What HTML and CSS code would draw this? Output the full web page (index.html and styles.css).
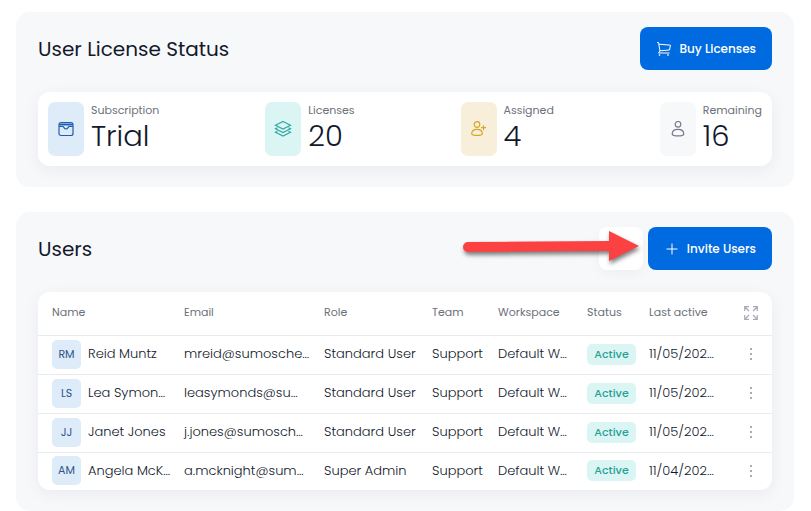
FILE: index.html
```html
<!DOCTYPE html>
<html lang="en">
<head>
    <meta charset="UTF-8">
    <meta name="viewport" content="width=device-width, initial-scale=1.0">
    <title>Users</title>
    <link rel="stylesheet" href="styles.css">
</head>
<body>
    <section class="panel">
        <div class="panel-header">
            <h2>User License Status</h2>
            <button class="btn" type="button">
                <svg width="16" height="16" viewBox="0 0 16 16">
                    <path d="M1 1.500h1.500l1.500 8.500M3 3.200l11.500 1-1 4.800-9.500.8M4 10l-1.500 2h11"/>
                    <circle cx="3.500" cy="14" r=".5"/>
                    <circle cx="12" cy="14" r=".5"/>
                </svg>
                Buy Licenses
            </button>
        </div>
        <div class="card stats">
            <div class="stat">
                <div class="stat-icon blue">
                    <svg width="16" height="16" viewBox="0 0 16 16">
                        <path class="tint" d="M1.500 2h13v3h-13z"/>
                        <rect x="1" y="1.500" width="14" height="13" rx="2"/>
                        <path d="M1 3.500h14M1 5.500h4c.8 0 1 2.500 3 2.500s2.200-2.500 3-2.500h4"/>
                    </svg>
                </div>
                <div>
                    <div class="stat-label">Subscription</div>
                    <div class="stat-value">Trial</div>
                </div>
            </div>
            <div class="stat">
                <div class="stat-icon teal">
                    <svg width="18" height="18" viewBox="0 0 18 18">
                        <path d="M9 1.500l7.500 3.700L9 9 1.500 5.200zM3.500 7.700l-2 1L9 12.500l7.500-3.800-2-1M3.500 11.200l-2 1L9 16l7.500-3.800-2-1"/>
                    </svg>
                </div>
                <div>
                    <div class="stat-label">Licenses</div>
                    <div class="stat-value">20</div>
                </div>
            </div>
            <div class="stat">
                <div class="stat-icon yellow">
                    <svg width="16" height="16" viewBox="0 0 16 16">
                        <circle cx="6" cy="3.500" r="2.800"/>
                        <path d="M.7 13c0-3 2.300-4.600 5.300-4.600s5.300 1.600 5.300 4.600c-.8 1.900-9.800 1.900-10.600 0zM12.500 4.200v5M10 6.700h5"/>
                    </svg>
                </div>
                <div>
                    <div class="stat-label">Assigned</div>
                    <div class="stat-value">4</div>
                </div>
            </div>
            <div class="stat">
                <div class="stat-icon grey">
                    <svg width="16" height="16" viewBox="0 0 16 16">
                        <circle cx="8" cy="3.300" r="2.800"/>
                        <path d="M2.200 13.200c0-3.200 2.600-4.800 5.800-4.800s5.800 1.600 5.800 4.800c-.8 2.200-10.800 2.200-11.600 0z"/>
                    </svg>
                </div>
                <div>
                    <div class="stat-label">Remaining</div>
                    <div class="stat-value">16</div>
                </div>
            </div>
        </div>
    </section>

    <section class="panel">
        <div class="panel-header">
            <h2>Users</h2>
            <div class="actions">
                <button class="btn-icon" type="button" aria-label="Filter">
                    <svg width="16" height="16" viewBox="0 0 16 16">
                        <path d="M2 3h12M4 7h8M6 11h4"/>
                    </svg>
                </button>
                <button class="btn" type="button">
                    <svg width="16" height="16" viewBox="0 0 16 16">
                        <path d="M8 2.500v11M2.500 8h11"/>
                    </svg>
                    Invite Users
                </button>
                <!-- Arrow pointing at the invite button -->
                <svg class="arrow" width="184" height="43" viewBox="0 0 184 43">
                    <path d="M10 15l141-1V4l30 15-30 15V24l-141 1a5 5 0 0 1 0-10z"/>
                </svg>
            </div>
        </div>
        <div class="card">
            <table>
                <thead>
                    <tr>
                        <th>Name</th>
                        <th class="col-email">Email</th>
                        <th class="col-role">Role</th>
                        <th class="col-team">Team</th>
                        <th class="col-workspace">Workspace</th>
                        <th class="col-status">Status</th>
                        <th class="col-last">Last active</th>
                        <th class="col-menu">
                            <button class="expand" type="button" aria-label="Expand table">
                                <svg width="16" height="16" viewBox="0 0 16 16">
                                    <path d="M6 1.700H1.700V6M2 2l4 4M10 1.700h4.300V6M14 2l-4 4M6 14.300H1.700V10M2 14l4-4M10 14.300h4.300V10M14 14l-4-4"/>
                                </svg>
                            </button>
                        </th>
                    </tr>
                </thead>
                <tbody>
                    <tr>
                        <td><div class="user"><span class="avatar">RM</span>Reid Muntz</div></td>
                        <td>mreid@sumosche…</td>
                        <td>Standard User</td>
                        <td>Support</td>
                        <td>Default W…</td>
                        <td><span class="badge">Active</span></td>
                        <td>11/05/202…</td>
                        <td><button class="dots" type="button" aria-label="More"><i></i><i></i><i></i></button></td>
                    </tr>
                    <tr>
                        <td><div class="user"><span class="avatar">LS</span>Lea Symon…</div></td>
                        <td>leasymonds@su…</td>
                        <td>Standard User</td>
                        <td>Support</td>
                        <td>Default W…</td>
                        <td><span class="badge">Active</span></td>
                        <td>11/05/202…</td>
                        <td><button class="dots" type="button" aria-label="More"><i></i><i></i><i></i></button></td>
                    </tr>
                    <tr>
                        <td><div class="user"><span class="avatar">JJ</span>Janet Jones</div></td>
                        <td>j.jones@sumosch…</td>
                        <td>Standard User</td>
                        <td>Support</td>
                        <td>Default W…</td>
                        <td><span class="badge">Active</span></td>
                        <td>11/05/202…</td>
                        <td><button class="dots" type="button" aria-label="More"><i></i><i></i><i></i></button></td>
                    </tr>
                    <tr>
                        <td><div class="user"><span class="avatar">AM</span>Angela McK…</div></td>
                        <td>a.mcknight@sum…</td>
                        <td>Super Admin</td>
                        <td>Support</td>
                        <td>Default W…</td>
                        <td><span class="badge">Active</span></td>
                        <td>11/04/202…</td>
                        <td><button class="dots" type="button" aria-label="More"><i></i><i></i><i></i></button></td>
                    </tr>
                </tbody>
            </table>
        </div>
    </section>
</body>
</html>
```
FILE: styles.css
```css
* {
    box-sizing: border-box;
}

body {
    margin: 0;
    padding: 12px 17px 0 16px;
    background: #fff;
    color: #12182b;
    font-family: Poppins, Inter, sans-serif;
    font-size: 13px;
}

h2 {
    margin: 0;
    font-size: 20px;
    font-weight: 400;
    line-height: 30px;
}

button {
    font-family: inherit;
    border: none;
    cursor: pointer;
}

svg {
    display: block;
    fill: none;
    stroke: currentColor;
    stroke-width: 1.2;
}

.panel {
    background: #f7f8fa;
    border-radius: 14px;
    padding: 15px 22px 21px;
}

.panel + .panel {
    margin-top: 25px;
}

.panel-header {
    display: flex;
    align-items: center;
    justify-content: space-between;
    margin-bottom: 22px;
}

.card {
    background: #fff;
    border-radius: 12px;
    box-shadow: 0 4px 16px rgba(20, 30, 60, 0.06);
}

/* Buttons */
.btn {
    display: flex;
    align-items: center;
    gap: 7px;
    height: 43px;
    padding: 0 16px;
    border-radius: 8px;
    background: #006be0;
    color: #fff;
    font-size: 12px;
    font-weight: 500;
}

.btn svg {
    stroke-width: 1;
}

.btn-icon {
    display: flex;
    align-items: center;
    justify-content: center;
    width: 44px;
    height: 43px;
    border-radius: 8px;
    background: #fff;
    box-shadow: 0 4px 12px rgba(20, 30, 60, 0.04);
}

.actions {
    position: relative;
    display: flex;
    gap: 5px;
}

.arrow {
    position: absolute;
    top: 0;
    right: 130px;
    fill: #fc4143;
    stroke: none;
    overflow: visible;
    pointer-events: none;
    filter: drop-shadow(1px 3px 2px rgba(0, 0, 0, 0.5));
}

/* License numbers */
.stats {
    display: flex;
    justify-content: space-between;
    padding: 10px;
}

.stat {
    display: flex;
    gap: 7px;
}

.stat-icon {
    display: flex;
    align-items: center;
    justify-content: center;
    width: 36px;
    height: 54px;
    border-radius: 7px;
}

.blue {
    background: #deebf9;
    color: #1f5fae;
}

.tint {
    fill: #7fa9d9;
    stroke: none;
}

.teal {
    background: #dbf5f4;
    color: #30aaa4;
}

.yellow {
    background: #f8efda;
    color: #d9a42b;
}

.grey {
    background: #f7f8fa;
    color: #777b8c;
}

.stat-label {
    color: #6c7079;
    font-size: 11px;
    line-height: 16px;
}

.stat-value {
    font-size: 29px;
    font-weight: 300;
    line-height: 36px;
}

/* Users table */
table {
    width: 100%;
    table-layout: fixed;
    border-collapse: separate;
    border-spacing: 0;
}

th,
td {
    padding: 0;
    text-align: left;
    white-space: nowrap;
}

th {
    height: 44px;
    padding-bottom: 2px;
    border-bottom: 1px solid #e9ebf2;
    color: #6c7079;
    font-size: 11px;
    font-weight: 400;
}

td {
    height: 39px;
    padding-bottom: 2px;
    border-bottom: 1px solid #e9ebf2;
    font-weight: 300;
}

tbody tr:last-child td {
    height: 37px;
    border-bottom: none;
}

th:first-child,
td:first-child {
    padding-left: 14px;
}

.col-email { width: 140px; }
.col-role { width: 108px; }
.col-team { width: 66px; }
.col-workspace { width: 89px; }
.col-status { width: 62px; }
.col-last { width: 94px; }
.col-menu { width: 29px; }

.user {
    display: flex;
    align-items: center;
    gap: 7px;
}

.avatar {
    width: 29px;
    border-radius: 5px;
    background: #deebf9;
    color: #2f5590;
    font-size: 11px;
    font-weight: 400;
    line-height: 29px;
    text-align: center;
}

.badge {
    display: inline-block;
    width: 49px;
    border-radius: 5px;
    background: #dbf5f4;
    color: #27a094;
    font-size: 11px;
    font-weight: 500;
    line-height: 21px;
    text-align: center;
}

.expand {
    display: block;
    padding: 0;
    background: none;
    color: #a9acb7;
}

.dots {
    display: flex;
    flex-direction: column;
    align-items: center;
    gap: 3px;
    width: 16px;
    padding: 0;
    background: none;
}

.dots i {
    width: 2px;
    height: 2px;
    background: #a9acb7;
}
```
